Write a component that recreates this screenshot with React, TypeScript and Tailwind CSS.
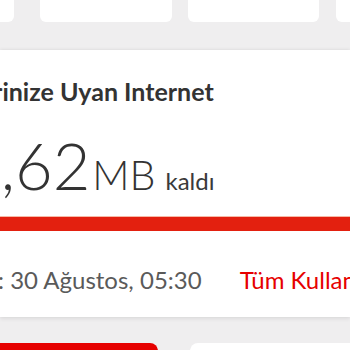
export default function App() {
  return (
    <div className="w-[350px] h-[350px] overflow-hidden bg-[#efeeef] relative" style={{ fontFamily: 'Lato, "Open Sans", sans-serif' }}>
      {/* Top tabs */}
      <div className="flex h-[22px]">
        <div className="w-[14px] h-full bg-white rounded-br-md shrink-0" />
        <div className="ml-[26px] w-[132px] h-full bg-white rounded-b-md shrink-0" />
        <div className="ml-[16px] w-[131px] h-full bg-white rounded-b-md shrink-0" />
        <div className="ml-[17px] w-[40px] h-full bg-white rounded-bl-md shrink-0" />
      </div>

      {/* Main card */}
      <div className="mt-[28px] h-[267px] bg-white shadow-[0_-1px_3px_rgba(0,0,0,0.06),0_2px_4px_rgba(0,0,0,0.08)]">
        <div className="pt-[25px] whitespace-nowrap">
          <div className="-ml-[83px] text-[25px] leading-[32px] font-bold text-[#333333]">
            Gecelerinize Uyan Internet
          </div>
        </div>

        <div className="mt-[26px] flex items-baseline whitespace-nowrap text-[#333333]">
          <span className="-ml-[37px] text-[65px] leading-none font-light">5,62</span>
          <span className="text-[41px] leading-none font-light ml-[2px]">MB</span>
          <span className="text-[24px] leading-none ml-[10px] text-[#3a3a3a]">kaldı</span>
        </div>

        <div className="mt-[18px] h-[15px] bg-[#e3200f] border-t border-[#f7b9a6]" />

        <div className="mt-[33px] flex items-baseline whitespace-nowrap text-[24px] leading-[32px]">
          <span className="-ml-[2px] text-[#5a5a5a]">: 30 Ağustos, 05:30</span>
          <span className="ml-[38px] text-[#e60000]">Tüm Kullanımlar</span>
        </div>
      </div>

      {/* Bottom buttons */}
      <div className="mt-[26px] flex">
        <div className="w-[158px] h-[20px] bg-[#e60000] rounded-tr-lg" />
        <div className="ml-[32px] flex-1 h-[20px] bg-white rounded-tl-lg" />
      </div>
    </div>
  );
}
